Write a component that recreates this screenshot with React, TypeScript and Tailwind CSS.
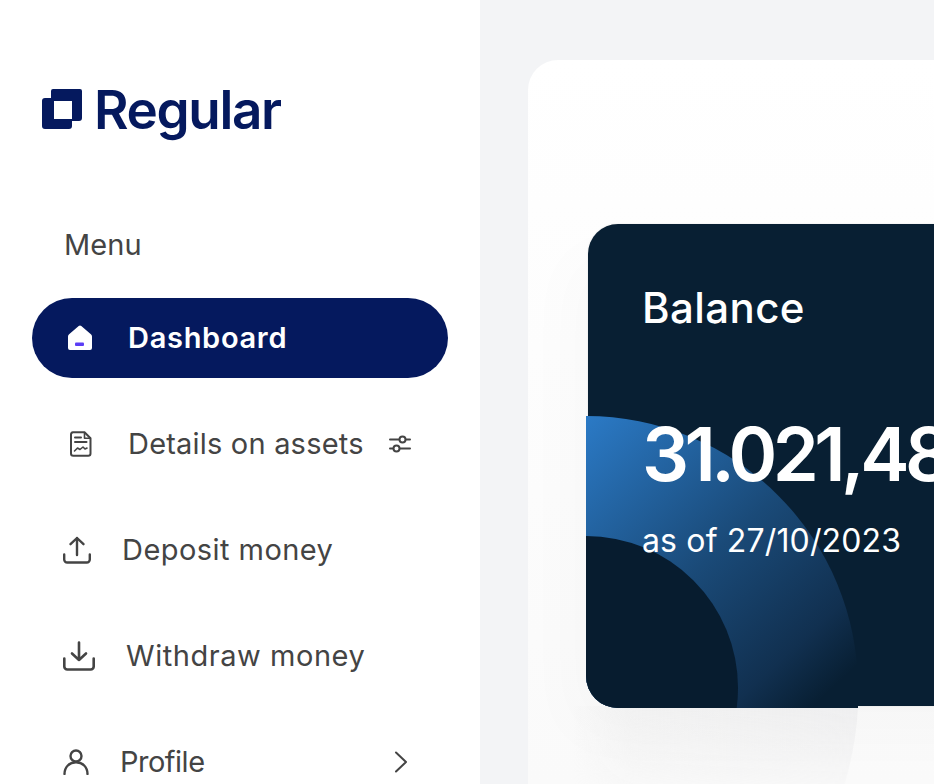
import type { ReactNode } from 'react';

function LogoMark() {
  return (
    <svg width="42" height="42" viewBox="0 0 42 42" className="shrink-0">
      <path
        fillRule="evenodd"
        fill="#05195e"
        d="M12 0h27a2 2 0 0 1 2 2v27a3 3 0 0 1-3 3h-7v5a3 3 0 0 1-3 3H4a3 3 0 0 1-3-3V12a3 3 0 0 1 3-3h6V2a2 2 0 0 1 2-2ZM13 12v18h18V12Z"
      />
    </svg>
  );
}

function HomeIcon() {
  return (
    <svg width="24" height="26" viewBox="0 0 24 26">
      <path d="M10.7 1a2 2 0 0 1 2.6 0l9.6 8.2A3 3 0 0 1 24 11.500V23a2 2 0 0 1-2 2H2a2 2 0 0 1-2-2V11.500a3 3 0 0 1 1.100-2.300Z" fill="#fff" />
      <rect x="7" y="17.500" width="9" height="3.500" rx="1" fill="#5b3df5" />
    </svg>
  );
}

function DocIcon() {
  return (
    <svg width="22" height="26" viewBox="0 0 22 26" fill="none" stroke="#444" strokeWidth="2" strokeLinejoin="round" strokeLinecap="round">
      <path d="M3 1.200h11.500l6 6V22.500a2.300 2.300 0 0 1-2.300 2.300H3.300A2.300 2.300 0 0 1 1 22.500V3.500a2.300 2.300 0 0 1 2-2.300Z" />
      <path d="M14.500 1.500v5.700h5.700" strokeWidth="1.600" />
      <path d="M5 6.500h6M5 11h11.500" />
      <path d="M4.500 20l3-3 2.500 1.500 3-2.500 2 2 2-1" strokeWidth="1.600" />
    </svg>
  );
}

function SlidersIcon() {
  return (
    <svg width="22" height="18" viewBox="0 0 22 18" fill="none" stroke="#444" strokeWidth="2" strokeLinecap="round">
      <path d="M1 4.500h9M17 4.500h4M1 13.500h3M11 13.500h10" />
      <circle cx="13.500" cy="4.500" r="3" />
      <circle cx="7.500" cy="13.500" r="3" />
    </svg>
  );
}

function UploadIcon() {
  return (
    <svg width="28" height="28" viewBox="0 0 28 28" fill="none" stroke="#444" strokeWidth="2.400" strokeLinecap="round" strokeLinejoin="round">
      <path d="M14 19V2M7.500 8.200 14 2l6.500 6.200" />
      <path d="M1.200 18.500v5a3 3 0 0 0 3 3h19.600a3 3 0 0 0 3-3v-5" />
    </svg>
  );
}

function DownloadIcon() {
  return (
    <svg width="32" height="30" viewBox="0 0 32 30" fill="none" stroke="#444" strokeWidth="2.600" strokeLinecap="round" strokeLinejoin="round">
      <path d="M16 1.500V19M9 12.500 16 19l7-6.500" />
      <path d="M1.300 17.500v8a3 3 0 0 0 3 3h23.400a3 3 0 0 0 3-3v-8" />
    </svg>
  );
}

function UserIcon() {
  return (
    <svg width="26" height="26" viewBox="0 0 26 26" fill="none" stroke="#444" strokeWidth="2.400" strokeLinecap="round">
      <circle cx="13" cy="7" r="5.500" />
      <path d="M1.500 25c0-7 5-11.800 11.500-11.800S24.500 18 24.500 25" />
    </svg>
  );
}

function ChevronIcon() {
  return (
    <svg width="14" height="22" viewBox="0 0 14 22" fill="none" stroke="#444" strokeWidth="2" strokeLinecap="round" strokeLinejoin="round">
      <path d="M2 1.500 12 11 2 20.500" />
    </svg>
  );
}

function Row({ children, className }: { children: ReactNode; className: string }) {
  return <div className={`flex h-20 w-[416px] items-center text-[29px] text-[#444] ${className}`}>{children}</div>;
}

export default function App() {
  return (
    <div className="flex h-[784px] w-[934px] overflow-hidden bg-white font-['Inter',sans-serif]">
      <aside className="flex w-[480px] shrink-0 flex-col pl-8">
        <div className="mt-[88px] flex items-center gap-[12px] pl-[9px]">
          <LogoMark />
          <span className="ml-[-1px] text-[53px] leading-[44px] font-semibold tracking-[-1.350px] text-[#05195e]">Regular</span>
        </div>
        <p className="mt-[95px] pl-8 text-[29px] leading-9 tracking-[0.100px] text-[#444]">Menu</p>
        <nav className="mt-[35px] flex flex-col gap-[26px]">
          <Row className="rounded-full bg-[#05195e] pl-[36px] font-semibold text-white">
            <HomeIcon />
            <span className="ml-[36px] tracking-[0.700px]">Dashboard</span>
          </Row>
          <Row className="pl-[38px]">
            <DocIcon />
            <span className="ml-[36px] tracking-[0.200px]">Details on assets</span>
            <span className="ml-[25px] flex"><SlidersIcon /></span>
          </Row>
          <Row className="pl-[31px]">
            <UploadIcon />
            <span className="ml-[31px] tracking-[0.450px]">Deposit money</span>
          </Row>
          <Row className="pl-[31px]">
            <DownloadIcon />
            <span className="ml-[31px] tracking-[0.550px]">Withdraw money</span>
          </Row>
          <Row className="pl-[31px]">
            <UserIcon />
            <span className="ml-[31px] tracking-[-0.500px]">Profile</span>
            <span className="ml-auto mr-10 flex"><ChevronIcon /></span>
          </Row>
        </nav>
      </aside>

      <main className="flex-1 rounded-tr-[40px] bg-[#f3f4f6] pt-[60px] pl-12">
        <div className="h-[724px] rounded-tl-[30px] bg-gradient-to-b from-white to-[#fafafa] pt-[164px] pl-[60px]">
          <div className="relative h-[482px] w-[520px] rounded-l-[30px] bg-[#081f33] shadow-[0_0_2px_rgba(0,0,0,0.12),-20px_30px_60px_rgba(0,0,0,0.02)]">
            {/* soft shadow under the ring, cut by the ring's outer circle */}
            <svg width="320" height="80" viewBox="0 0 320 80" className="absolute top-[482px] left-[-50px]">
              <defs>
                <linearGradient id="shade" x1="0" y1="0" x2="1" y2="0">
                  <stop offset="0.1" stopColor="#efefef" stopOpacity="0" />
                  <stop offset="0.3" stopColor="#efefef" stopOpacity="0.75" />
                  <stop offset="1" stopColor="#eeeeef" />
                </linearGradient>
                <linearGradient id="fade" x1="0" y1="0" x2="0" y2="1">
                  <stop offset="0" stopColor="#fff" />
                  <stop offset="1" stopColor="#fff" stopOpacity="0.2" />
                </linearGradient>
                <mask id="fadeMask">
                  <rect width="320" height="80" fill="url(#fade)" />
                </mask>
              </defs>
              <path d="M0 0H320Q318 40 306 80H0Z" fill="url(#shade)" mask="url(#fadeMask)" />
            </svg>
            <svg width="272" height="292" viewBox="0 0 272 292" className="absolute top-[192px] left-[-2px]">
              <defs>
                <linearGradient id="ring" gradientUnits="userSpaceOnUse" x1="0" y1="0" x2="272" y2="292">
                  <stop offset="0" stopColor="#2b7ac6" />
                  <stop offset="0.47" stopColor="#1a4a78" />
                  <stop offset="0.78" stopColor="#113050" />
                  <stop offset="0.92" stopColor="#081f33" />
                </linearGradient>
                <clipPath id="cardCorner">
                  <path d="M0 0H272V292H32A32 32 0 0 1 0 260Z" />
                </clipPath>
              </defs>
              <g clipPath="url(#cardCorner)">
                <rect width="272" height="292" fill="#081f33" />
                <circle cx="0" cy="272" r="272" fill="url(#ring)" />
                <circle cx="0" cy="272" r="152" fill="#071c2f" />
              </g>
            </svg>
            <div className="relative pt-[60px] pl-[54px] text-white">
              <p className="text-[42px] leading-[48px] font-medium tracking-[0.400px]">Balance</p>
              <p className="mt-[77px] text-[74px] leading-[90px] font-semibold tracking-[-4.500px] whitespace-nowrap">31.021,48</p>
              <p className="mt-[22px] text-[32px] leading-10 tracking-[0.150px] whitespace-nowrap">as of 27/10/2023</p>
            </div>
          </div>
        </div>
      </main>
    </div>
  );
}
